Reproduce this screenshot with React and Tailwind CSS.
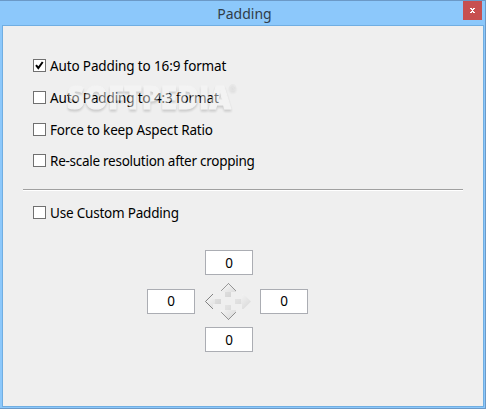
import React, { useState } from 'react';

const options = [
  { id: 'wide', label: 'Auto Padding to 16:9 format', className: 'mt-[33px] tracking-[-0.13px]' },
  { id: 'standard', label: 'Auto Padding to 4:3 format', className: 'mt-[19px] tracking-[-0.13px]' },
  { id: 'aspect', label: 'Force to keep Aspect Ratio', className: 'mt-[19px] tracking-[-0.17px]' },
  { id: 'rescale', label: 'Re-scale resolution after cropping', className: 'mt-[18px] tracking-[-0.27px]' },
];

function CheckOption({ label, checked, onChange, className }) {
  return (
    <label className={`flex h-[13px] items-center whitespace-nowrap ${className}`}>
      <input type="checkbox" className="sr-only" checked={checked} onChange={onChange} />
      <span className="mr-1 flex h-[13px] w-[13px] shrink-0 items-center justify-center border border-[#707070] bg-white">
        {checked && (
          <svg width="11" height="11" viewBox="0 0 11 11" fill="none">
            <path d="M2 5.2L4.3 8L8.7 2" stroke="#000" strokeWidth="2" />
          </svg>
        )}
      </span>
      <span className="text-[13.5px] leading-[18px]">{label}</span>
    </label>
  );
}

function PaddingInput({ label, value, onChange }) {
  return (
    <input
      aria-label={label}
      className="h-[25px] w-12 border border-[#abadb3] bg-white p-0 text-center text-[13.5px] leading-[23px] text-black outline-none"
      value={value}
      onChange={onChange}
    />
  );
}

function DirectionArrows() {
  return (
    <svg width="49" height="40" viewBox="0 0 49 40" className="shrink-0">
      <defs>
        <linearGradient id="arrowFill" x1="0" y1="0" x2="1" y2="1">
          <stop offset="0" stopColor="#fafafa" />
          <stop offset="1" stopColor="#d6d6d6" />
        </linearGradient>
      </defs>
      <g fill="url(#arrowFill)">
        <path d="M25.5 2L33 9.5V11H28V16H22V11H18V9.5Z" />
        <path d="M25.5 39L33 31.5V29H28V24H22V29H18V31.5Z" />
        <path d="M2.5 20.5L10 13V18H18V23H10V28Z" />
        <path d="M48 20.5L40.5 13H39V18H32V23H39V28H40.5Z" />
      </g>
      <g fill="#cecece" fillOpacity=".45">
        <path d="M22 11h6v5h-6z" />
        <path d="M22 24h6v5h-6z" />
        <path d="M12 18h6v5h-6z" />
        <path d="M32 18h6v5h-6z" />
      </g>
      <g fill="none" stroke="#555" strokeWidth="1" strokeDasharray="1 .45">
        <path d="M18.5 9.5L25.5 2.5L32.5 9.5" />
        <path d="M18.5 31.5L25.5 38.5L32.5 31.5" />
        <path d="M10 13L2.5 20.5L10 28" />
      </g>
    </svg>
  );
}

function Watermark() {
  return (
    <svg className="pointer-events-none absolute left-[61px] top-[50px] opacity-45 drop-shadow-[0_2px_1px_rgba(0,0,0,0.35)]" width="180" height="46" viewBox="0 0 180 46">
      <g fontFamily="Open Sans, sans-serif" fontWeight="800" fill="#f8f8f8">
        <text x="3" y="33" fontSize="31" textLength="164" lengthAdjust="spacingAndGlyphs" stroke="#f8f8f8" strokeWidth="1" strokeLinejoin="round">SOFTPEDIA</text>
        <text x="165" y="15" fontSize="9" fontWeight="400" fill="#d8d8d8">®</text>
      </g>
    </svg>
  );
}

export default function App() {
  const [selected, setSelected] = useState({ wide: true });
  const [padding, setPadding] = useState({ top: '0', left: '0', right: '0', bottom: '0' });

  const toggle = (id) => setSelected((prev) => ({ ...prev, [id]: !prev[id] }));
  const change = (side) => (e) => setPadding((prev) => ({ ...prev, [side]: e.target.value }));

  return (
    <div className="flex h-[409px] w-[486px] flex-col overflow-hidden border-b border-r border-t border-[#6b99c7] bg-[#8cc8fb] pb-px pl-[2px] pr-px font-['Noto_Sans','Open_Sans',sans-serif] text-black">
      <div className="flex h-6 shrink-0 items-start">
        <h1 className="ml-[24px] flex-1 pt-px text-center text-[14px] leading-6 text-[#303d49]">Padding</h1>
        <button className="mr-[2px] flex h-[19px] w-[19px] items-center justify-center bg-[#c75050]" aria-label="Close">
          <svg width="5" height="5" viewBox="0 0 5 5" fill="#fff" shapeRendering="crispEdges">
            <path d="M0 0h2v1H0zM3 0h2v1H3zM1 1h3v1H1zM2 2h1v1H2zM1 3h3v1H1zM0 4h2v1H0zM3 4h2v1H3z" />
          </svg>
        </button>
      </div>

      <main className="relative flex-1 border border-[#70aee2] bg-[#efefef]">
        <div className="pl-[30px]">
          {options.map((option) => (
            <CheckOption
              key={option.id}
              label={option.label}
              className={option.className}
              checked={!!selected[option.id]}
              onChange={() => toggle(option.id)}
            />
          ))}
        </div>

        <div className="ml-5 mt-[22px] h-[2px] w-[440px] border-b border-t border-b-white border-t-[#a0a0a0]" />

        <div className="pl-[30px]">
          <CheckOption
            label="Use Custom Padding"
            className="mt-[15px] tracking-[-0.2px]"
            checked={!!selected.custom}
            onChange={() => toggle('custom')}
          />
        </div>

        <div className="ml-36 mt-[31px] flex w-[161px] flex-col items-center">
          <div className="flex h-[25px] w-full pl-[58px]">
            <PaddingInput label="Top padding" value={padding.top} onChange={change('top')} />
          </div>
          <div className="flex h-[52px] w-full items-center justify-between">
            <PaddingInput label="Left padding" value={padding.left} onChange={change('left')} />
            <DirectionArrows />
            <PaddingInput label="Right padding" value={padding.right} onChange={change('right')} />
          </div>
          <div className="flex h-[25px] w-full pl-[58px]">
            <PaddingInput label="Bottom padding" value={padding.bottom} onChange={change('bottom')} />
          </div>
        </div>

        <Watermark />
      </main>
    </div>
  );
}
